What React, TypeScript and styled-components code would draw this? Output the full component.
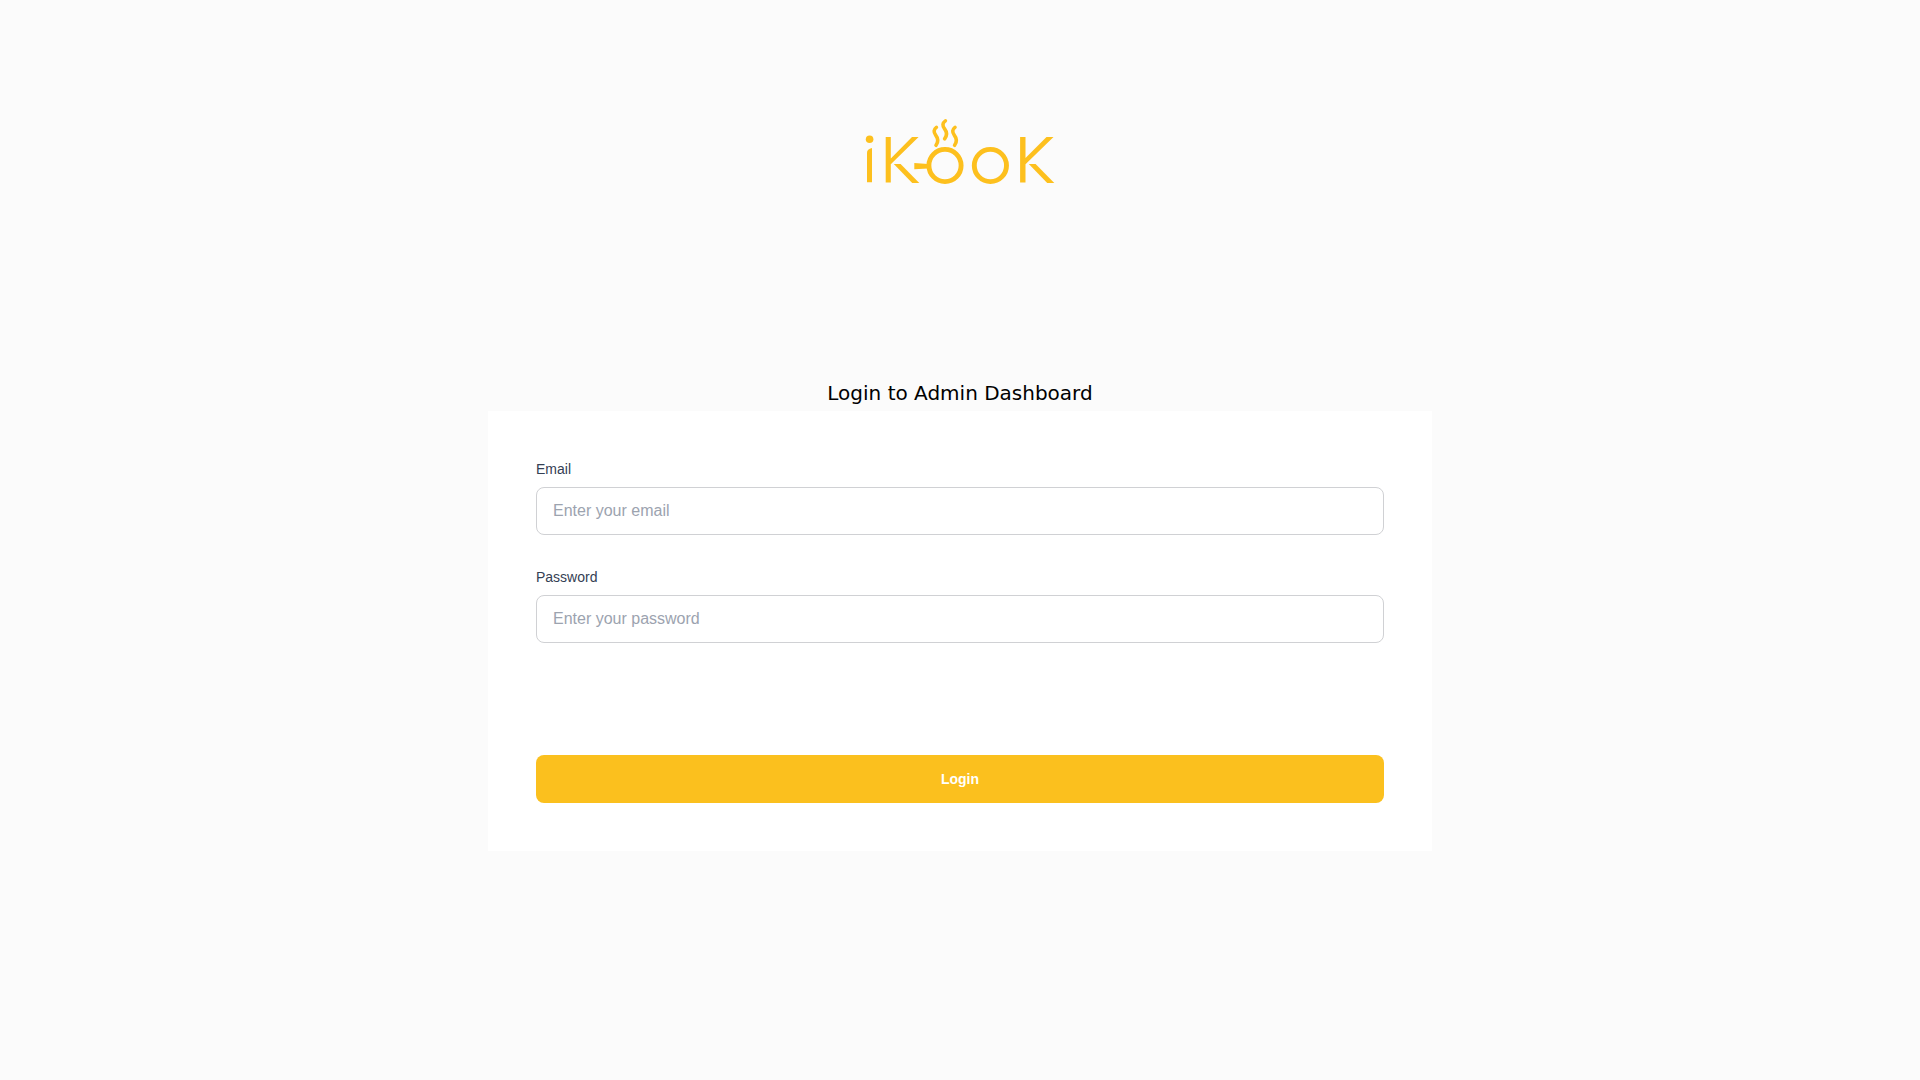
import React from "react";
import styled, { createGlobalStyle } from "styled-components";

const GlobalStyle = createGlobalStyle`
  *, *::before, *::after { box-sizing: border-box; }
  body {
    margin: 0;
    background: #fbfbfb;
    font-family: "Liberation Sans", Arial, sans-serif;
  }
`;

const Page = styled.main`
  display: flex;
  flex-direction: column;
  align-items: center;
  min-height: 100vh;
  padding: 112px 0 48px;
`;

const Logo = styled.svg`
  display: block;
  width: 200px;
  height: 80px;
  margin-bottom: 183px;
`;

const Heading = styled.h1`
  margin: 0;
  color: #000;
  font-family: "DejaVu Sans", sans-serif;
  font-size: 20px;
  font-weight: 400;
  line-height: 36px;
`;

const Card = styled.form`
  display: flex;
  flex-direction: column;
  gap: 32px;
  width: 100%;
  max-width: 944px;
  padding: 48px;
  background: #fff;
`;

const Field = styled.div`
  display: flex;
  flex-direction: column;
  gap: 8px;
`;

const Label = styled.label`
  color: #344054;
  font-size: 14px;
  line-height: 20px;
`;

const TextInput = styled.input`
  width: 100%;
  height: 48px;
  padding: 0 16px;
  border: 1px solid #d0d1d4;
  border-radius: 8px;
  background: #fff;
  color: #344054;
  font-family: inherit;
  font-size: 16px;

  &::placeholder {
    color: #9ca3af;
    opacity: 1;
  }
`;

const SubmitButton = styled.button`
  height: 48px;
  margin-top: 80px;
  border: 0;
  border-radius: 8px;
  background: #fbc01e;
  color: #fff;
  font-family: inherit;
  font-size: 14px;
  font-weight: 700;
  line-height: 20px;
  cursor: pointer;
`;

function BrandLogo() {
  return (
    <Logo viewBox="860 112 200 80" role="img" aria-label="iKooK">
      <g fill="#fdc01e">
        <circle cx="869.6" cy="139.3" r="3.8" />
        <path d="M867 182.3V152.5Q867 149 872 148V182.3Z" />
        <path d="M885.7 137H890.8V158.4L912 137H918.6L890.8 164.2V182.4H885.7Z" />
        <path d="M893.8 164H900.6L919.3 183H912.2Z" />
        <path d="M914.3 163L928 164V168.4L914.3 169.3Z" />
        <path d="M1020.1 137H1025.5V158L1046.5 137H1053.5L1025.5 164.2V182.4H1020.1Z" />
        <path d="M1028.8 164H1035.6L1054.3 183H1047.2Z" />
      </g>
      <g fill="none" stroke="#fdc01e" strokeWidth="4.9">
        <circle cx="945" cy="165.5" r="16.1" />
        <circle cx="990.4" cy="165.5" r="16.1" />
      </g>
      <g fill="none" stroke="#fdc01e" strokeWidth="3.6" strokeLinecap="round">
        <path d="M936.4 127.4C933.6 129.5 933.4 132.2 935.8 135.3C938.4 138.6 938.6 141.6 936 145.3" />
        <path d="M945.4 120.9C942.4 123 942.2 125.7 944.6 128.8C947.2 132.1 947.4 135.1 944.6 138.8" />
        <path d="M955 127.4C952.2 129.5 952 132.2 954.4 135.3C957 138.6 957.2 141.6 954.6 145.3" />
      </g>
    </Logo>
  );
}

export default function App() {
  return (
    <>
      <GlobalStyle />
      <Page>
        <BrandLogo />
        <Heading>Login to Admin Dashboard</Heading>
        <Card onSubmit={(event: React.FormEvent) => event.preventDefault()}>
          <Field>
            <Label htmlFor="email">Email</Label>
            <TextInput id="email" type="email" placeholder="Enter your email" />
          </Field>
          <Field>
            <Label htmlFor="password">Password</Label>
            <TextInput id="password" type="password" placeholder="Enter your password" />
          </Field>
          <SubmitButton type="submit">Login</SubmitButton>
        </Card>
      </Page>
    </>
  );
}
